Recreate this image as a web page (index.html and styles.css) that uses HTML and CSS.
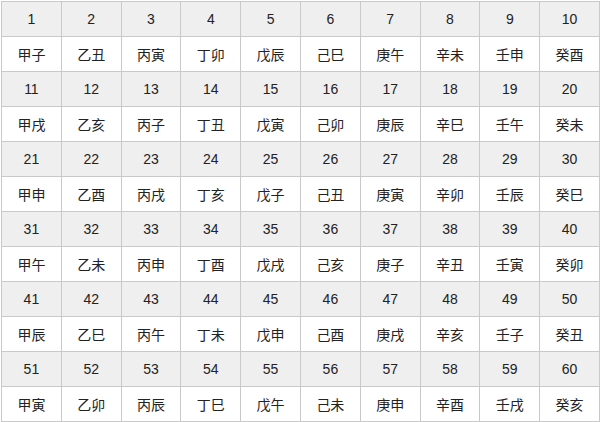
FILE: index.html
```html
<!DOCTYPE html>
<html>
<head>
<meta charset="utf-8">
<link rel="stylesheet" href="styles.css">
</head>
<body>
<table class="jiazi">
<tr class="num"><td>1</td><td>2</td><td>3</td><td>4</td><td>5</td><td>6</td><td>7</td><td>8</td><td>9</td><td>10</td></tr>
<tr class="gz"><td>甲子</td><td>乙丑</td><td>丙寅</td><td>丁卯</td><td>戊辰</td><td>己巳</td><td>庚午</td><td>辛未</td><td>壬申</td><td>癸酉</td></tr>
<tr class="num"><td>11</td><td>12</td><td>13</td><td>14</td><td>15</td><td>16</td><td>17</td><td>18</td><td>19</td><td>20</td></tr>
<tr class="gz"><td>甲戌</td><td>乙亥</td><td>丙子</td><td>丁丑</td><td>戊寅</td><td>己卯</td><td>庚辰</td><td>辛巳</td><td>壬午</td><td>癸未</td></tr>
<tr class="num"><td>21</td><td>22</td><td>23</td><td>24</td><td>25</td><td>26</td><td>27</td><td>28</td><td>29</td><td>30</td></tr>
<tr class="gz"><td>甲申</td><td>乙酉</td><td>丙戌</td><td>丁亥</td><td>戊子</td><td>己丑</td><td>庚寅</td><td>辛卯</td><td>壬辰</td><td>癸巳</td></tr>
<tr class="num"><td>31</td><td>32</td><td>33</td><td>34</td><td>35</td><td>36</td><td>37</td><td>38</td><td>39</td><td>40</td></tr>
<tr class="gz"><td>甲午</td><td>乙未</td><td>丙申</td><td>丁酉</td><td>戊戌</td><td>己亥</td><td>庚子</td><td>辛丑</td><td>壬寅</td><td>癸卯</td></tr>
<tr class="num"><td>41</td><td>42</td><td>43</td><td>44</td><td>45</td><td>46</td><td>47</td><td>48</td><td>49</td><td>50</td></tr>
<tr class="gz"><td>甲辰</td><td>乙巳</td><td>丙午</td><td>丁未</td><td>戊申</td><td>己酉</td><td>庚戌</td><td>辛亥</td><td>壬子</td><td>癸丑</td></tr>
<tr class="num"><td>51</td><td>52</td><td>53</td><td>54</td><td>55</td><td>56</td><td>57</td><td>58</td><td>59</td><td>60</td></tr>
<tr class="gz"><td>甲寅</td><td>乙卯</td><td>丙辰</td><td>丁巳</td><td>戊午</td><td>己未</td><td>庚申</td><td>辛酉</td><td>壬戌</td><td>癸亥</td></tr>
</table>
</body>
</html>
```
FILE: styles.css
```css
html, body {
  margin: 0;
  padding: 0;
  background: #ffffff;
}
body {
  padding: 1px 0 0 1px;
}
.jiazi {
  border-collapse: collapse;
  table-layout: fixed;
  width: 599px;
  font-family: "Liberation Sans", "Noto Sans CJK SC", sans-serif;
  font-size: 14px;
  color: #222;
}
.jiazi td {
  border: 1px solid #c9c9c9;
  height: 35px;
  padding: 0;
  text-align: center;
  vertical-align: middle;
  box-sizing: border-box;
}
.jiazi .num td {
  background: #efefef;
}
.jiazi .gz td {
  background: #ffffff;
}
```
